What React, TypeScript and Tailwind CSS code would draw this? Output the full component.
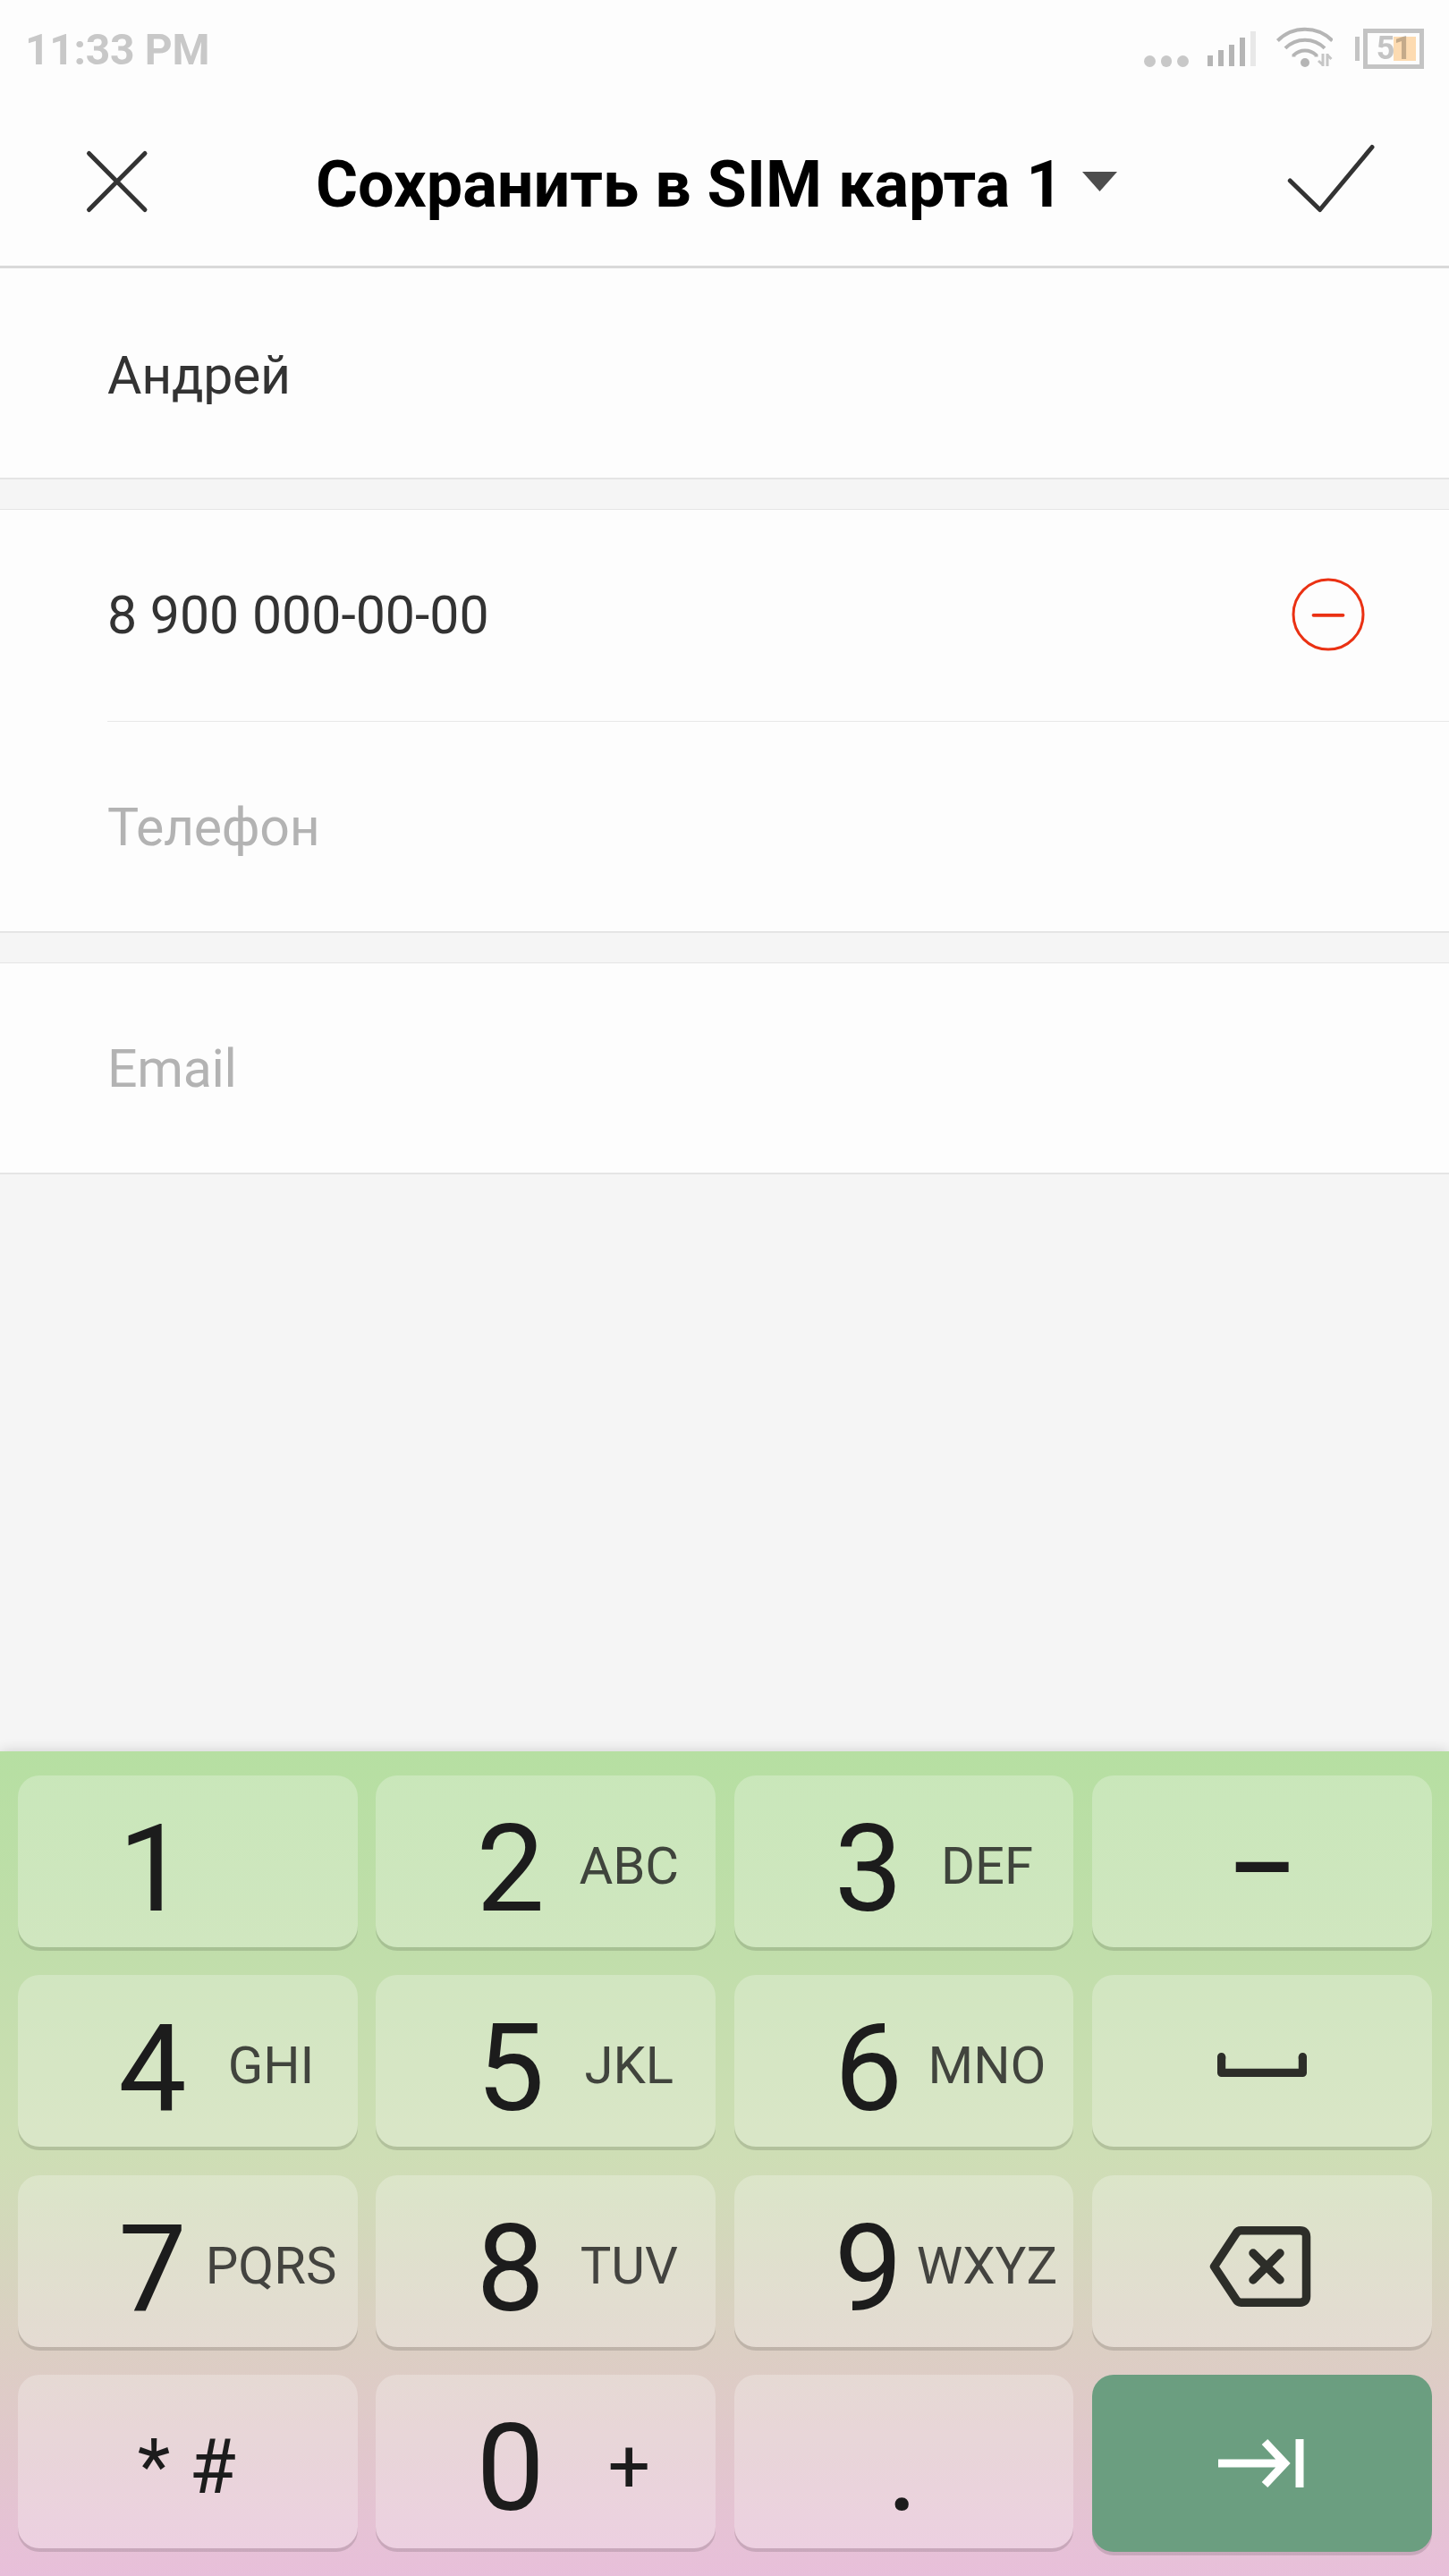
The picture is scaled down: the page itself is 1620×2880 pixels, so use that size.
import type { ReactNode } from 'react';

function StatusBar() {
  return (
    <div className="flex h-[110px] items-start justify-between pl-[28px] pr-[28px]">
      <span className="mt-[28px] text-[48px] leading-[56px] font-bold tracking-[-0.3px] text-[#c8c8c8]">11:33 PM</span>
      <div className="flex items-start">
        <div className="mt-[62px] mr-[21px] flex gap-[6px]">
          <i className="size-[12.6px] rounded-full bg-[#c8c8c8]" />
          <i className="size-[12.6px] rounded-full bg-[#c8c8c8]" />
          <i className="size-[12.6px] rounded-full bg-[#c8c8c8]" />
        </div>
        <div className="mt-[35px] mr-[21px] flex h-[39px] items-end gap-[6px]">
          <i className="h-[12px] w-[6px] bg-[#b5b5b5]" />
          <i className="h-[18px] w-[6px] bg-[#b5b5b5]" />
          <i className="h-[24px] w-[6px] bg-[#b5b5b5]" />
          <i className="h-[32px] w-[6px] bg-[#b5b5b5]" />
          <i className="h-[39px] w-[6px] bg-[#e8e8e8]" />
        </div>
        <svg className="mt-[28px] mr-[25px]" width="65" height="48" viewBox="0 0 65 48" fill="none" stroke="#b5b5b5" strokeWidth="4">
          <path d="M3.4 17.5a43 43 0 0 1 61.2 0" />
          <path d="M12 25.8a31 31 0 0 1 44 0" />
          <path d="M21.5 35.5v-1.8a17.8 17.8 0 0 1 25 0v1.8" />
          <circle cx="34" cy="42" r="5" fill="#b5b5b5" stroke="none" />
          <g stroke="#c6c6c6" strokeWidth="3">
            <path d="M54 32v14M49 40l5 4.500" />
            <path d="M59 46V32M59 33.500l4.500 4.500" />
          </g>
        </svg>
        <div className="mt-[32px] flex items-center">
          <i className="mr-[4px] h-[27px] w-[5px] bg-[#c4c4c4]" />
          <div className="relative flex h-[45px] w-[68px] items-center justify-center border-[5px] border-[#c4c4c4]">
            <span className="text-[36px] leading-[35px] font-bold tracking-[-1.5px] text-[#c4c4c4]">51</span>
            <i className="absolute top-[4px] right-[4px] h-[27px] w-[25px] bg-[#ffddb3] mix-blend-multiply" />
          </div>
        </div>
      </div>
    </div>
  );
}

function Header() {
  return (
    <div className="flex h-[190px] items-start border-b-[3px] border-[#d9d9d9] pl-[95px] pr-[82px]">
      <svg className="mt-[56px]" width="72" height="74" viewBox="0 0 72 74" fill="none" stroke="#333" strokeWidth="5" strokeLinecap="round">
        <path d="M4.500 5.500 67 68.500M67 5.500 4.500 68.500" />
      </svg>
      <h1 className="mt-[55px] ml-[186px] w-[857px] text-[72px] leading-[84px] font-bold whitespace-nowrap text-black">Сохранить в SIM карта 1</h1>
      <svg className="mt-[82px]" width="39" height="22" viewBox="0 0 39 22">
        <path d="M0 0h39L19.500 22z" fill="#4d4d4d" />
      </svg>
      <svg className="mt-[50px] ml-auto" width="100" height="80" viewBox="0 0 100 80" fill="none" stroke="#333" strokeWidth="5" strokeLinecap="round" strokeLinejoin="round">
        <path d="M4.300 42 37.700 74.500 96 4.500" />
      </svg>
    </div>
  );
}

type RowProps = { text: string; tone?: string; children?: ReactNode };

function Row({ text, tone = 'text-[#333333] tracking-[-0.3px]', children }: RowProps) {
  return (
    <div className="flex h-[234px] items-start justify-between pr-[94px] pl-[120px]">
      <span className={`text-[59px] leading-[236px] ${tone}`}>{text}</span>
      {children}
    </div>
  );
}

const PLACEHOLDER = 'text-[#b3b3b3] tracking-[-0.3px]';
const LABEL = 'mt-[5px] w-[166px] text-center text-[58px] leading-[192px] whitespace-nowrap text-[#1c1c1c]/80';
const PLUS = 'mt-[7px] w-[166px] text-center text-[84px] leading-[192px] text-[#1c1c1c]';

function Key({ digit, label }: { digit: string; label: string }) {
  return (
    <button className="flex min-h-[192px] items-start rounded-[24px] bg-white/25 pl-[101px] shadow-[0_4px_0_rgba(0,0,0,0.13)]">
      <span className="mt-[9px] -mb-[9px] w-[99px] text-center text-[136px] leading-[192px] text-[#1c1c1c]">{digit}</span>
      <span className={label === '+' ? PLUS : LABEL}>{label}</span>
    </button>
  );
}

function IconKey({ children }: { children: ReactNode }) {
  return (
    <button className="flex items-start justify-center rounded-[24px] bg-white/25 text-[#1c1c1c] shadow-[0_4px_0_rgba(0,0,0,0.13)]">
      {children}
    </button>
  );
}

function Keyboard() {
  return (
    <div className="grid h-[922px] grid-cols-4 grid-rows-[192px_192px_192px_194px] gap-x-[20.500px] gap-y-[31.300px] bg-[linear-gradient(to_bottom,#b6dfa2_0%,#c1deab_25%,#cedeb5_49%,#d8d3c0_66%,#ddcdc5_75%,#e2c6ce_87%,#e8bfda_100%)] pt-[27px] pr-[19.500px] pl-[20px] shadow-[0_0_14px_rgba(0,0,0,0.16)]">
      <Key digit="1" label="" />
      <Key digit="2" label="ABC" />
      <Key digit="3" label="DEF" />
      <IconKey>
        <span className="mt-[8px] text-[118px] leading-[192px] font-medium">–</span>
      </IconKey>

      <Key digit="4" label="GHI" />
      <Key digit="5" label="JKL" />
      <Key digit="6" label="MNO" />
      <IconKey>
        <svg className="mt-[87px]" width="100" height="27" viewBox="0 0 100 27" fill="none" stroke="#2d2e29" strokeWidth="9.200" strokeLinejoin="round">
          <path d="M4.600 4v18.400h90.800V4" />
          <path d="M4.600 4.600v2M95.400 4.600v2" strokeLinecap="round" />
        </svg>
      </IconKey>

      <Key digit="7" label="PQRS" />
      <Key digit="8" label="TUV" />
      <Key digit="9" label="WXYZ" />
      <IconKey>
        <svg className="mt-[57px] mr-[3px]" width="114" height="90" viewBox="0 0 114 90" fill="none" stroke="#2d2e29" strokeWidth="9.500" strokeLinejoin="round" strokeLinecap="round">
          <path d="M5.500 45 30 8q2-3.200 5.500-3.200h66q7 0 7 7v66.400q0 7-7 7h-66q-3.500 0-5.500-3.200z" />
          <path d="m49 30 30 30M79 30 49 60" />
        </svg>
      </IconKey>

      <IconKey>
        <span className="mt-[7px] mr-[2px] text-[85px] leading-[192px]">* #</span>
      </IconKey>
      <Key digit="0" label="+" />
      <IconKey>
        <span className="mt-[9px] mr-[3px] text-[136px] leading-[192px]">.</span>
      </IconKey>
      <button className="flex h-[198px] items-start justify-center rounded-[24px] bg-[#6b9e80] shadow-[0_4px_0_rgba(0,0,0,0.13)]">
        <svg className="mt-[71.500px]" width="98" height="56" viewBox="0 0 98 56" fill="none" stroke="#fff" strokeWidth="9">
          <path d="M0 28h74M52 4l22.500 24-22.500 24" />
          <path d="M91 1v54" />
        </svg>
      </button>
    </div>
  );
}

export default function App() {
  return (
    <div className="flex h-[2880px] w-[1620px] flex-col overflow-hidden bg-[#f5f5f5] font-['Roboto',sans-serif]">
      <div className="bg-[#fdfdfd]">
        <StatusBar />
        <Header />
      </div>
      <div className="h-[236px] border-b-2 border-[#e5e5e5] bg-[#fdfdfd] pt-[2px]">
        <Row text="Андрей" />
      </div>
      <div className="mt-[33px] border-t border-b-2 border-[#e5e5e5] bg-[#fdfdfd]">
        <Row text="8 900 000-00-00" tone="text-[#333333]">
          <svg className="mt-[76px]" width="82" height="82" viewBox="0 0 82 82" fill="none" stroke="#ea3113">
            <circle cx="41" cy="41" r="39" strokeWidth="3" />
            <path d="M24.500 41.800h33" strokeWidth="3.800" strokeLinecap="round" />
          </svg>
        </Row>
        <div className="mt-[2px] ml-[120px] h-px bg-[#e8e8e8]" />
        <Row text="Телефон" tone={PLACEHOLDER} />
      </div>
      <div className="mt-[33px] border-t border-b-2 border-[#e5e5e5] bg-[#fdfdfd]">
        <Row text="Email" tone={PLACEHOLDER} />
      </div>
      <div className="grow" />
      <Keyboard />
    </div>
  );
}
